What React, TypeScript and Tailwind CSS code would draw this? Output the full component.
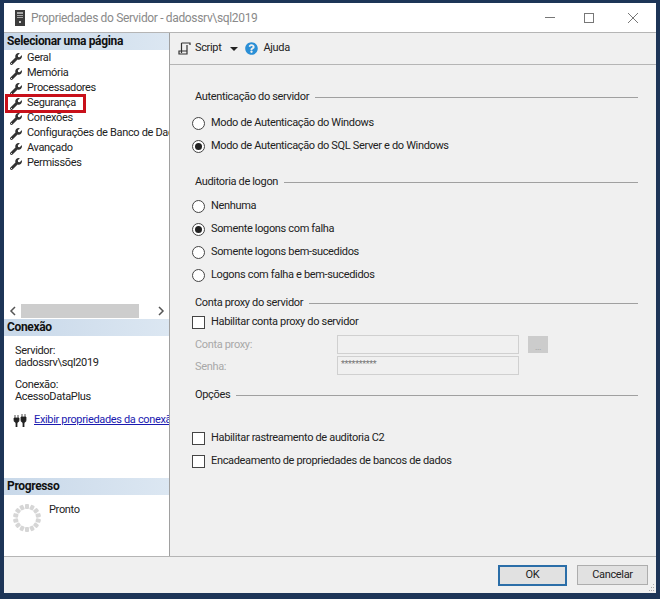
import { FaWrench, FaQuestionCircle } from 'react-icons/fa';

const pages = ['Geral', 'Memória', 'Processadores', 'Segurança', 'Conexões', 'Configurações de Banco de Dados', 'Avançado', 'Permissões'];

function Section({ title }: { title: string }) {
  return (
    <div className="h-[17px] shrink-0 bg-gradient-to-r from-[#c8d8e9] to-[#dce7f2] pl-[3px] text-[12px] leading-[17px] font-bold text-[#111]">
      {title}
    </div>
  );
}

function Group({ title }: { title: string }) {
  return (
    <div className="flex h-[14px] items-center gap-[6px] pl-[25px] pr-[18px] text-[#222]">
      <span className="whitespace-nowrap">{title}</span>
      <div className="h-px flex-1 bg-[#a0a0a0]" />
    </div>
  );
}

function Radio({ label, checked }: { label: string; checked?: boolean }) {
  return (
    <div className="flex h-[23px] items-center gap-[6px] pl-[22px] text-[#222]">
      <span className="flex h-[13px] w-[13px] items-center justify-center rounded-full border border-[#444] bg-white">
        {checked && <span className="h-[7px] w-[7px] rounded-full bg-[#222]" />}
      </span>
      <span className="whitespace-nowrap">{label}</span>
    </div>
  );
}

function Check({ label }: { label: string }) {
  return (
    <div className="flex h-[23px] items-center gap-[6px] pl-[22px] text-[#222]">
      <span className="h-[13px] w-[13px] border border-[#444] bg-white" />
      <span className="whitespace-nowrap">{label}</span>
    </div>
  );
}

function Spinner() {
  const dots = Array.from({ length: 14 }, (_, i) => (i * 360) / 14);
  return (
    <svg width="30" height="30" viewBox="0 0 30 30" className="shrink-0">
      {dots.map((a) => (
        <rect key={a} x="13" y="1" width="4" height="5" rx="1" fill="#d6d6d6" transform={`rotate(${a} 15 15)`} />
      ))}
    </svg>
  );
}

export default function App() {
  return (
    <div className="relative h-[599px] w-[660px] overflow-hidden bg-[#1d3557] pt-[3px] pb-[6px] pl-[4px] pr-[4px] font-['Roboto',sans-serif] text-[11px] tracking-[-0.34px]">
      <div className="flex h-[590px] flex-col bg-white">
        {/* title bar */}
        <div className="flex h-[30px] shrink-0 items-center border-b border-[#b5b5b5] bg-white pl-[10px]">
          <svg width="12" height="16" viewBox="0 0 12 16">
            <rect x="1" y="0" width="10" height="16" fill="#3c3c3c" />
            <rect x="3" y="2" width="6" height="2" fill="#a8a8a8" />
            <rect x="3" y="5" width="6" height="1" fill="#a8a8a8" />
            <rect x="3" y="7" width="6" height="1" fill="#a8a8a8" />
            <rect x="5" y="11" width="2" height="2" fill="#d0d0d0" />
          </svg>
          <span className="ml-[5px] flex-1 text-[12px] text-[#8a8a8a]">Propriedades do Servidor - dadossrv\sql2019</span>
          <div className="h-px w-[10px] bg-[#777]" />
          <div className="ml-[29px] h-[10px] w-[10px] border border-[#777]" />
          <svg width="12" height="12" viewBox="0 0 12 12" className="ml-[33px] mr-[17px]">
            <path d="M1 1 L11 11 M11 1 L1 11" stroke="#777" strokeWidth="1" fill="none" />
          </svg>
        </div>

        <div className="flex min-h-0 flex-1">
          {/* left panel */}
          <div className="flex w-[166px] shrink-0 flex-col overflow-hidden border-r border-[#a0a0a0] bg-white">
            <Section title="Selecionar uma página" />
            <div className="h-[253px] shrink-0 pt-[1px]">
              {pages.map((p) => (
                <div key={p} className="flex h-[15px] items-center whitespace-nowrap pl-[6px] text-[#222]">
                  <FaWrench className="mr-[5px] h-[12px] w-[12px] shrink-0 text-[#333]" />
                  {p}
                </div>
              ))}
            </div>
            <div className="flex h-[16px] shrink-0 items-center bg-white text-[#555]">
              <svg width="17" height="16" viewBox="0 0 17 16" className="shrink-0">
                <path d="M11 4 L7 8 L11 12" stroke="#555" strokeWidth="1.5" fill="none" />
              </svg>
              <div className="h-[14px] w-[118px] bg-[#cdcdcd]" />
              <svg width="30" height="16" viewBox="0 0 30 16" className="shrink-0">
                <path d="M20 4 L24 8 L20 12" stroke="#555" strokeWidth="1.5" fill="none" />
              </svg>
            </div>
            <Section title="Conexão" />
            <div className="h-[142px] shrink-0 pt-[9px] leading-[12px] text-[#222]">
              <div className="pl-[11px]">Servidor:</div>
              <div className="pl-[11px]">dadossrv\sql2019</div>
              <div className="mt-[10px] pl-[11px]">Conexão:</div>
              <div className="pl-[11px]">AcessoDataPlus</div>
              <div className="mt-[10px] flex items-center whitespace-nowrap pl-[9px]">
                <svg width="14" height="14" viewBox="0 0 14 14" className="mr-[7px] shrink-0">
                  <path d="M1 5 H6 V7 C6 9 4.5 9.5 4 10 V14 H3 V10 C2.5 9.5 1 9 1 7 Z M2 2 V5 M5 2 V5 M8 4 H13 V7 C13 9 11.5 9.5 11 10 V14 H10 V10 C9.5 9.5 8 9 8 7 Z M9 1 V4 M12 1 V4" stroke="#222" strokeWidth="0.8" fill="#222" />
                </svg>
                <span className="text-[#1a1ab0] underline">Exibir propriedades da conexão</span>
              </div>
            </div>
            <Section title="Progresso" />
            <div className="flex flex-1 items-start pl-[8px] pt-[8px] text-[#222]">
              <Spinner />
              <span className="ml-[7px] mt-[-1px]">Pronto</span>
            </div>
          </div>

          {/* right panel */}
          <div className="flex min-w-0 flex-1 flex-col bg-[#f0f0f0]">
            <div className="flex h-[32px] shrink-0 items-center border-b border-[#b5b5b5] pl-[8px] text-[#222]">
              <svg width="13" height="13" viewBox="0 0 13 13">
                <path d="M3.5 1 H12 V3 M3.5 1 V11 M1 9 V12 H9 V9 Z M9 3 V9" stroke="#333" strokeWidth="1.2" fill="none" />
              </svg>
              <span className="ml-[4px]">Script</span>
              <svg width="8" height="4" viewBox="0 0 8 4" className="ml-[9px]">
                <path d="M0 0 H8 L4 4 Z" fill="#222" />
              </svg>
              <FaQuestionCircle className="ml-[7px] h-[13px] w-[13px] text-[#2b8fd6]" />
              <span className="ml-[5px]">Ajuda</span>
            </div>
            <div className="flex-1 pt-[25px]">
              <Group title="Autenticação do servidor" />
              <div className="mt-[8px]">
                <Radio label="Modo de Autenticação do Windows" />
                <Radio label="Modo de Autenticação do SQL Server e do Windows" checked />
              </div>
              <div className="mt-[17px]">
                <Group title="Auditoria de logon" />
              </div>
              <div className="mt-[6px]">
                <Radio label="Nenhuma" />
                <Radio label="Somente logons com falha" checked />
                <Radio label="Somente logons bem-sucedidos" />
                <Radio label="Logons com falha e bem-sucedidos" />
              </div>
              <div className="mt-[9px]">
                <Group title="Conta proxy do servidor" />
              </div>
              <div className="mt-[1px]">
                <Check label="Habilitar conta proxy do servidor" />
              </div>
              <div className="flex h-[21px] items-center pl-[25px] text-[#a8a8a8]">
                <span className="w-[142px] pt-[1px]">Conta proxy:</span>
                <div className="h-[19px] w-[182px] border border-[#d0d0d0] bg-[#f0f0f0]" />
                <div className="ml-[9px] flex h-[17px] w-[20px] items-end justify-center bg-[#cccccc] text-[9px] leading-[12px] text-[#999]">...</div>
              </div>
              <div className="flex h-[21px] items-center pl-[25px] text-[#a8a8a8]">
                <span className="w-[142px] pt-[4px]">Senha:</span>
                <div className="h-[19px] w-[182px] border border-[#d0d0d0] bg-[#f0f0f0] pl-[3px] text-[9px] leading-[14px] text-[#777]">**********</div>
              </div>
              <div className="mt-[12px]">
                <Group title="Opções" />
              </div>
              <div className="mt-[25px]">
                <Check label="Habilitar rastreamento de auditoria C2" />
                <Check label="Encadeamento de propriedades de bancos de dados" />
              </div>
            </div>
          </div>
        </div>

        {/* footer */}
        <div className="relative flex h-[37px] shrink-0 items-center justify-end border-t border-[#b5b5b5] bg-[#f0f0f0] pr-[8px] text-[#222]">
          <button className="h-[21px] w-[69px] border-2 border-[#2b6ea8] bg-[#e1e1e1]">OK</button>
          <button className="ml-[10px] h-[20px] w-[71px] border border-[#adadad] bg-[#e1e1e1]">Cancelar</button>
          <svg width="8" height="8" viewBox="0 0 8 8" className="absolute bottom-[1px] right-[1px]">
            <path d="M6 0h1v1H6z M4 3h1v1H4z M6 3h1v1H6z M2 6h1v1H2z M4 6h1v1H4z M6 6h1v1H6z" fill="#aaa" />
          </svg>
        </div>
      </div>
      {/* red highlight on the screenshot */}
      <div className="pointer-events-none absolute left-[5px] top-[94px] h-[19px] w-[81px] border-[3px] border-[#c8101a]" />
    </div>
  );
}
